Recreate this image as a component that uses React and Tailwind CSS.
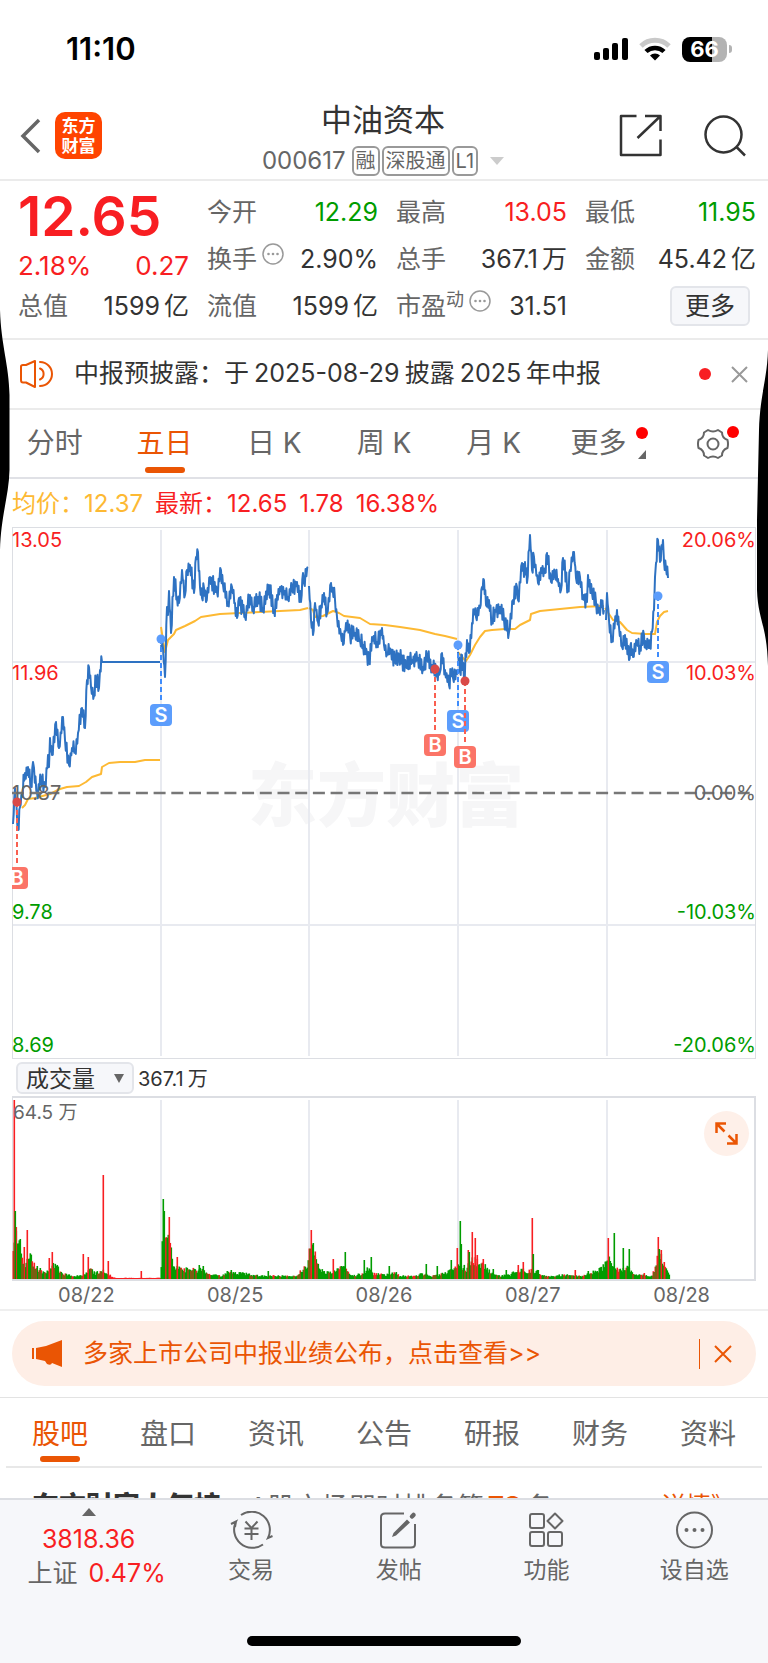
import { useMemo, useState } from 'react';

const GREEN = '#009c00';
const RED = '#f81e22';

const PRICE_DAYS = [
  [13,824,15,788,18,830,20,807,22,793,25,773,28,767,31,787,33,762,34,768,37,793,41,780,45,787,48,755,49,767,50,738,52,755,56,722,59,748,63,717,65,740,69,765,72,748,75,750,78,733,82,708,85,728,87,680,89,667,91,687,94,695,96,678,99,688,100,670,102,662],
  [161,645,163,648,165,677,167,607,168,615,169,591,171,633,174,577,177,598,179,603,182,570,185,595,187,570,190,565,194,593,196,557,198,552,200,587,202,598,204,588,206,602,210,577,217,592,221,570,223,585,228,602,232,587,235,603,237,618,239,598,245,617,250,595,253,607,258,597,263,608,269,585,274,610,280,587,288,597,292,588,297,582,301,602,303,573,304,583,308,567],
  [309,586,311,620,313,635,315,603,318,622,324,593,327,613,331,583,335,600,337,617,341,635,343,645,346,623,350,635,355,633,360,640,363,645,367,653,369,663,372,637,377,642,382,628,384,645,387,653,391,650,395,662,399,655,406,667,412,660,418,658,423,667,427,657,432,665,437,673,440,672,442,653,445,670,449,685,451,670,453,678,457,675],
  [458,652,460,672,462,655,464,680,467,640,469,653,472,623,474,610,476,617,480,608,482,587,484,580,486,605,489,600,492,622,495,610,500,607,504,620,509,632,513,600,517,587,518,600,522,563,524,577,525,562,527,583,530,535,532,570,534,557,538,583,541,568,545,573,547,553,551,582,555,573,561,590,563,558,568,590,570,570,574,552,576,578,580,577,583,595,587,602,588,575,592,593,596,602,600,615,601,600,604,610],
  [606,620,607,593,609,620,612,640,617,610,619,627,622,647,625,635,629,660,631,643,633,657,637,642,640,646,644,635,646,648,648,642,650,648,652,632,654,610,655,577,656,563,658,540,660,562,663,540,664,562,666,568,668,578],
];

const AVERAGE_DAYS = [
  '22,808 25,805 28,799 35,798 50,794 60,789 67,787 79,786 86,782 92,777 101,774 102,767 109,763 120,762 135,762 145,760 160,760',
  '161,627 163,640 165,652 168,640 174,634 176,630 185,626 195,621 201,617 220,614 240,613 260,612 280,611 300,610 308,608',
  '309,608 313,610 315,617 323,616 329,613 333,611 339,613 344,616 360,618 370,624 385,625 400,627 420,630 435,634 445,636 457,639',
  '458,652 462,657 466,661 470,655 475,645 480,637 485,631 492,630 505,629 515,629 520,625 526,622 530,620 531,614 540,611 560,609 580,607 604,606',
  '605,608 609,614 613,620 620,622 627,630 632,633 645,634 655,634 657,622 660,616 664,612 668,611',
];

const VOLUME_LEVELS = [
  13,40,15,50,17,40,20,25,25,15,27,28,32,20,36,10,40,10,45,5,50,9,53,14,57,11,62,5,70,4,77,3,85,4,90,10,95,5,100,8,105,7,112,2,115,1,135,1,160,1,
  162,30,164,40,167,40,170,32,173,15,178,10,185,9,200,9,210,4,222,3,230,7,240,6,245,5,260,3,280,3,297,3,300,9,307,12,309,25,313,28,318,12,325,6,335,7,342,12,347,8,352,3,362,5,368,10,373,5,385,4,392,6,400,3,
  410,3,425,5,430,3,440,4,447,7,452,10,457,10,458,15,462,12,466,10,470,18,475,17,480,15,485,13,490,6,500,3,510,4,516,8,522,9,526,6,530,8,536,8,540,4,550,3,565,4,580,3,590,6,598,8,605,14,609,18,615,10,620,8,626,12,632,7,636,4,652,3,656,15,660,28,664,12,668,6,670,2,
];

const RED_SPIKES = [14,179,16,52,24,32,27,49,49,21,52,27,83,25,88,22,103,104,108,18,141,8,169,62,170,36,177,22,311,49,315,22,333,20,457,31,468,29,472,47,475,41,477,24,483,20,518,14,523,17,532,61,575,9,608,41,644,6,658,42,661,29,664,17];
const GREEN_SPIKES = [15,68,20,40,163,80,164,68,199,14,203,13,227,8,231,9,268,8,313,36,345,27,364,19,371,22,389,13,396,7,426,15,437,13,451,19,460,58,461,35,469,27,493,10,506,9,533,25,538,9,588,8,599,11,614,46,623,31,629,30,659,30];

const TRADES = [
  { type: 'B', x: 17, y: 802 },
  { type: 'S', x: 161, y: 639 },
  { type: 'B', x: 435, y: 669 },
  { type: 'S', x: 458, y: 645 },
  { type: 'B', x: 465, y: 681 },
  { type: 'S', x: 658, y: 596 },
];

const GRID_X = [161, 309, 458, 607];

const pairs = (flat) => {
  const out = [];
  for (let i = 0; i < flat.length; i += 2) out.push([flat[i], flat[i + 1]]);
  return out;
};

// Small seeded generator so the ticks are the same on every render
const createRandom = (seed) => {
  let s = seed;
  return () => {
    s = (s * 16807) % 2147483647;
    return s / 2147483647;
  };
};

const buildPriceLine = (flat, seed) => {
  const random = createRandom(seed);
  const pts = pairs(flat);
  const out = [];
  pts.forEach(([x, y], i) => {
    out.push(`${x},${y}`);
    const next = pts[i + 1];
    if (!next) return;
    const steps = Math.max(1, Math.round((next[0] - x) / 0.8));
    for (let k = 1; k < steps; k++) {
      const t = k / steps;
      const jitter = (k % 2 ? 1 : -1) * (2 + random() * 7);
      out.push(`${(x + (next[0] - x) * t).toFixed(1)},${(y + (next[1] - y) * t + jitter).toFixed(1)}`);
    }
  });
  return out.join(' ');
};

const buildVolumeBars = () => {
  const random = createRandom(77);
  const levels = pairs(VOLUME_LEVELS);
  const bars = [];
  for (let i = 0; i < levels.length - 1; i++) {
    const [x0, h0] = levels[i];
    const [x1, h1] = levels[i + 1];
    for (let x = x0; x < x1; x++) {
      const h = h0 + ((h1 - h0) * (x - x0)) / (x1 - x0);
      const quiet = x > 108 && x < 161;
      bars.push({ x, h: Math.max(1, h * (0.7 + random() * 0.6)), color: quiet || random() < 0.2 ? RED : GREEN });
    }
  }
  pairs(RED_SPIKES).forEach(([x, h]) => bars.push({ x, h, color: RED }));
  pairs(GREEN_SPIKES).forEach(([x, h]) => bars.push({ x, h, color: GREEN }));
  return bars;
};

function StatusBar() {
  return (
    <div className="flex h-24 items-center justify-between pt-0.5 pl-[66px] pr-9 text-black">
      <span className="text-[31px] font-semibold">11:10</span>
      <div className="flex items-center gap-[11px]">
        <svg width="34" height="24" viewBox="0 0 34 24" fill="currentColor">
          <rect x="0" y="15" width="6" height="8" rx="2" />
          <rect x="9" y="11" width="6" height="12" rx="2" />
          <rect x="18" y="6" width="6" height="17" rx="2" />
          <rect x="28" y="1" width="6" height="22" rx="2" />
        </svg>
        <svg width="32" height="24" viewBox="0 0 32 24" fill="none">
          <path d="M2 9 A20 20 0 0 1 30 9" stroke="#c9c9c9" strokeWidth="5" />
          <path d="M7 14.500 A13 13 0 0 1 25 14.500" stroke="currentColor" strokeWidth="4.500" />
          <path d="M16 23.500 L11 18.500 A7 7 0 0 1 21 18.500 Z" fill="currentColor" />
        </svg>
        <div className="flex items-center gap-0.5">
          <div className="flex h-[25px] w-[45px] items-center justify-center rounded-lg bg-linear-to-r from-black from-66% to-[#b3b3b3] to-66%">
            <span className="text-[22px] leading-none font-bold text-white">66</span>
          </div>
          <div className="h-2 w-[3px] rounded-r-full bg-[#b3b3b3]" />
        </div>
      </div>
    </div>
  );
}

function Header() {
  return (
    <header className="grid h-[85px] grid-cols-[1fr_auto_1fr] items-center border-b-2 border-[#ebebeb] pl-5 pr-[22px]">
      <div className="flex items-center gap-3.5 pb-1">
        <button type="button" aria-label="返回">
          <svg width="21" height="36" viewBox="0 0 21 36" fill="none" stroke="#666" strokeWidth="3.500">
            <path d="M19 2 L3 18 L19 34" />
          </svg>
        </button>
        <a href="#home" className="flex h-[47px] w-[47px] flex-col items-center justify-center rounded-[10px] bg-[#ff4400] text-[17px] leading-[20px] font-bold text-white">
          <span>东方</span>
          <span>财富</span>
        </a>
      </div>
      <div className="flex flex-col items-center pt-1">
        <h1 className="text-[31px] leading-[38px] text-[#333]">中油资本</h1>
        <div className="mt-1 flex items-center gap-0.5 text-[24px] leading-[36px] text-[#666]">
          <span className="mr-1">000617</span>
          <span className="rounded-md border-2 border-[#999] px-0.5 text-[20px] leading-[26px]">融</span>
          <span className="rounded-md border-2 border-[#999] px-0.5 text-[20px] leading-[26px]">深股通</span>
          <span className="rounded-md border-2 border-[#999] px-0.5 text-[20px] leading-[26px]">L1</span>
          <svg className="ml-2.5" width="14" height="8" viewBox="0 0 14 8" fill="#ccc">
            <path d="M0 0 H14 L7 8 Z" />
          </svg>
        </div>
      </div>
      <div className="flex items-center justify-end gap-[42px] pb-1">
        <button type="button" aria-label="分享">
          <svg width="43" height="43" viewBox="0 0 43 43" fill="none" stroke="#333" strokeWidth="2.500" strokeLinejoin="round">
            <path d="M17.500 2 H2 V41 H41.500 V25.500" />
            <path d="M26 2 H41.500 V17 M41 2.500 L18.500 24" />
          </svg>
        </button>
        <button type="button" aria-label="搜索">
          <svg width="42" height="42" viewBox="0 0 42 42" fill="none" stroke="#333" strokeWidth="2.500">
            <circle cx="19.500" cy="19.500" r="18" />
            <path d="M32.500 32 L41 40.500" />
          </svg>
        </button>
      </div>
    </header>
  );
}

function InfoDot() {
  return (
    <svg className="ml-[5px] mb-2.5 shrink-0" width="22" height="22" viewBox="0 0 22 22" fill="none">
      <circle cx="11" cy="11" r="10" stroke="#999" strokeWidth="1.500" />
      <circle cx="6.500" cy="11" r="1.300" fill="#999" />
      <circle cx="11" cy="11" r="1.300" fill="#999" />
      <circle cx="15.500" cy="11" r="1.300" fill="#999" />
    </svg>
  );
}

function Stat({ label, value, tone = 'text-[#333]', info = false }) {
  return (
    <div className="flex h-[47px] items-center">
      <span className="text-[#666]">{label}</span>
      {info && <InfoDot />}
      <span className={`ml-auto ${tone}`}>{value}</span>
    </div>
  );
}

function Quote() {
  return (
    <section className="grid grid-cols-4 gap-x-[18px] border-b-2 border-[#ebebeb] pt-[7px] pr-3 pb-[9px] pl-[18px] text-[25px] leading-[30px] whitespace-nowrap">
      <div>
        <div className="flex h-14 items-center text-[55px] font-semibold text-[#f81e22]">12.65</div>
        <div className="flex h-10 items-center justify-between pt-1 text-[26px] text-[#f81e22]">
          <span>2.18%</span>
          <span>0.27</span>
        </div>
        <div className="flex h-11 items-center justify-between">
          <span className="text-[#666]">总值</span>
          <span className="text-[#333]">1599<span className="ml-1">亿</span></span>
        </div>
      </div>
      <div>
        <Stat label="今开" value="12.29" tone="text-[#009c00]" />
        <Stat label="换手" value="2.90%" info />
        <Stat label="流值" value={<>1599<span className="ml-1">亿</span></>} />
      </div>
      <div>
        <Stat label="最高" value="13.05" tone="text-[#f81e22]" />
        <Stat label="总手" value={<>367.1<span className="ml-1">万</span></>} />
        <Stat label={<>市盈<sup className="text-[18px]">动</sup></>} value="31.51" info />
      </div>
      <div>
        <Stat label="最低" value="11.95" tone="text-[#009c00]" />
        <Stat label="金额" value={<>45.42<span className="ml-1">亿</span></>} />
        <div className="flex h-[47px] items-center justify-end pr-1.5">
          <button type="button" className="h-10 w-20 rounded-md border-2 border-[#e3e5ea] bg-[#f6f7fa] text-[#333]">更多</button>
        </div>
      </div>
    </section>
  );
}

function Notice() {
  return (
    <section className="flex h-[70px] items-center border-b-2 border-[#ebebeb] pl-5 pr-5 text-[25px] text-[#333]">
      <svg width="34" height="30" viewBox="0 0 34 30" fill="none" stroke="#ea5504" strokeWidth="2" strokeLinejoin="round" strokeLinecap="round">
        <path d="M1 7.500 Q1 6 3 6 H6 L15 2 V28 L6 23.500 H3 Q1 23.500 1 21 Z" />
        <path d="M20 9.500 A6 6 0 0 1 20 20.500 M20 3 A12 12 0 0 1 20 27" />
      </svg>
      <p className="ml-5 flex-1 whitespace-nowrap">
        中报预披露：于<span className="mx-[5px]">2025-08-29</span>披露<span className="mx-[5px]">2025</span>年中报
      </p>
      <span className="h-3 w-3 rounded-full bg-[#f81e22]" />
      <button type="button" aria-label="关闭" className="ml-5">
        <svg width="17" height="17" viewBox="0 0 17 17" stroke="#999" strokeWidth="2">
          <path d="M1 1 L16 16 M16 1 L1 16" />
        </svg>
      </button>
    </section>
  );
}

function PeriodTabs() {
  const [active, setActive] = useState('五日');
  const tabs = ['分时', '五日', '日 K', '周 K', '月 K'];

  return (
    <nav className="grid h-[69px] grid-cols-7 border-b-2 border-[#e0e1e6] text-[28px] text-[#666]">
      {tabs.map((tab) => (
        <button
          key={tab}
          type="button"
          onClick={() => setActive(tab)}
          className={`relative pb-px whitespace-nowrap ${active === tab ? 'text-[#ea5504]' : ''}`}
        >
          {tab}
          {active === tab && <span className="absolute bottom-1 left-1/2 h-1.5 w-10 -translate-x-1/2 rounded-full bg-[#ea5504]" />}
        </button>
      ))}
      <button type="button" className="flex items-center justify-center gap-2.5 pb-px pl-3">
        更多
        <span className="flex h-8 flex-col items-center justify-between">
          <span className="h-3 w-3 rounded-full bg-[#ff0000]" />
          <svg width="8" height="9" viewBox="0 0 8 9" fill="#666">
            <path d="M8 0 V9 H0 Z" />
          </svg>
        </span>
      </button>
      <button type="button" aria-label="设置" className="flex items-center justify-center">
        <span className="relative">
          <svg width="32" height="32" viewBox="0 0 32 32" fill="none" stroke="#666" strokeWidth="2" strokeLinejoin="round">
            <path d="M11 2 Q16 5 21 2 L25 4.500 Q25 10 30.500 12 Q31.500 16 30.500 20 Q25 22 25 27.500 L21 30 Q16 27 11 30 L7 27.500 Q7 22 1.500 20 Q0.500 16 1.500 12 Q7 10 7 4.500 Z" />
            <circle cx="16" cy="16" r="5.500" />
          </svg>
          <span className="absolute -top-0.5 -right-2.5 h-3 w-3 rounded-full bg-[#ff0000]" />
        </span>
      </button>
    </nav>
  );
}

function PriceChart() {
  const lines = useMemo(() => PRICE_DAYS.map((day, i) => buildPriceLine(day, 31 + i * 17)), []);

  return (
    <svg className="block w-full" viewBox="12 527 744 532" fontSize="20" role="img" aria-label="五日走势">
      <text x="386" y="821" textAnchor="middle" fontSize="69" fontWeight="900" fill="#f6f6f7">东方财富</text>
      <g stroke="#e8eaf0" strokeWidth="2">
        {GRID_X.map((x) => <path key={x} d={`M${x} 530 V1056`} />)}
        <path d="M12 662 H755 M12 925 H755" />
      </g>
      <rect x="12.500" y="527.500" width="743" height="531" fill="none" stroke="#dcdee3" />
      <g fill={RED}>
        <text x="12" y="547">13.05</text>
        <text x="12" y="680">11.96</text>
        <text x="756" y="547" textAnchor="end">20.06%</text>
        <text x="756" y="680" textAnchor="end">10.03%</text>
      </g>
      <g fill={GREEN}>
        <text x="12" y="919">9.78</text>
        <text x="12" y="1052">8.69</text>
        <text x="756" y="919" textAnchor="end">-10.03%</text>
        <text x="756" y="1052" textAnchor="end">-20.06%</text>
      </g>
      <g fill="none" stroke="#fdb933" strokeWidth="2" strokeLinejoin="round">
        {AVERAGE_DAYS.map((points) => <polyline key={points} points={points} />)}
      </g>
      <g fill="none" stroke="#2e72c2" strokeWidth="2" strokeLinejoin="round">
        {lines.map((points) => <polyline key={points} points={points} />)}
        <path d="M102 662 H160" />
      </g>
      <path d="M12 793 H755" stroke="#777" strokeWidth="2.500" strokeDasharray="12 5.700" />
      <g fill="#666">
        <text x="12" y="800">10.87</text>
        <text x="756" y="800" textAnchor="end">0.00%</text>
      </g>
      {TRADES.map(({ type, x, y }) => {
        const color = type === 'B' ? '#fb7467' : '#5c9dfc';
        return (
          <g key={x}>
            <path d={`M${x} ${y} V${y + 64}`} stroke={type === 'B' ? '#f95f50' : '#3f8cfb'} strokeWidth="2" strokeDasharray="5 3" />
            <circle cx={x} cy={y} r="4.500" fill={type === 'B' ? '#d94a48' : color} />
            <rect x={x - 11} y={y + 65} width="22" height="22" rx="4" fill={color} />
            <text x={x} y={y + 83} textAnchor="middle" fontSize="20" fontWeight="600" fill="#fff">{type}</text>
          </g>
        );
      })}
    </svg>
  );
}

function VolumeChart() {
  const bars = useMemo(buildVolumeBars, []);

  return (
    <div className="relative">
      <svg className="block w-full" viewBox="12 1096 744 185" fontSize="19" role="img" aria-label="成交量">
        <path d={GRID_X.map((x) => `M${x} 1100 V1279`).join(' ')} stroke="#e8eaf0" strokeWidth="2" />
        <path d="M12 1097 H755 V1280 H12 Z" fill="none" stroke="#dcdee3" strokeWidth="2" />
        {bars.map(({ x, h, color }, i) => (
          <rect key={i} x={x - 0.5} y={1279 - h} width="1.600" height={h} fill={color} />
        ))}
        <text x="13" y="1119" fill="#666">64.5 万</text>
      </svg>
      <button type="button" aria-label="全屏" className="absolute top-[15px] right-[7px] flex h-[45px] w-[45px] items-center justify-center rounded-full bg-[#fef0e9]">
        <svg width="23" height="23" viewBox="0 0 23 23" fill="none" stroke="#ea5504" strokeWidth="2.500">
          <path d="M11 1.500 H1.500 V11 M1.500 1.500 L9.500 9.500 M12 21.500 H21.500 V12 M21.500 21.500 L13.500 13.500" />
        </svg>
      </button>
    </div>
  );
}

function ChartPanel() {
  return (
    <section className="border-b-2 border-[#efefef] px-3">
      <div className="flex h-12 items-center gap-3 pt-0.5 text-[24px] text-[#f81e22] whitespace-nowrap">
        <span className="text-[#fdb933]">均价：12.37</span>
        <span>最新：12.65</span>
        <span>1.78</span>
        <span>16.38%</span>
      </div>
      <PriceChart />
      <div className="flex h-[37px] items-center gap-1 pl-1">
        <div className="relative">
          <select aria-label="指标" className="h-8 w-[118px] appearance-none rounded-md border-2 border-[#e3e5ea] bg-[#f6f7fa] pt-0.5 pl-2 text-[23px] leading-[26px] text-[#333]">
            <option>成交量</option>
            <option>成交额</option>
          </select>
          <svg className="pointer-events-none absolute top-3 right-2.5" width="10" height="9" viewBox="0 0 10 9" fill="#666">
            <path d="M0 0 H10 L5 9 Z" />
          </svg>
        </div>
        <span className="pt-0.5 text-[20px] text-[#333]">367.1<span className="ml-1">万</span></span>
      </div>
      <VolumeChart />
      <div className="grid h-7 grid-cols-5 items-center text-center text-[20px] leading-6 text-[#666]">
        {['08/22', '08/25', '08/26', '08/27', '08/28'].map((day) => <span key={day}>{day}</span>)}
      </div>
    </section>
  );
}

function Banner() {
  return (
    <section className="border-b border-[#e3e3e3] px-3 pt-2.5 pb-[11px]">
      <div className="flex h-[65px] items-center rounded-full bg-[#feeee6] pr-6 pl-5 text-[25px] text-[#ea5504]">
        <svg width="31" height="27" viewBox="0 0 31 27" fill="currentColor">
          <path d="M0 8 H2 V19 H0 Z M4 8 L14 6 L30 0 V27 L20 23 Q19 26 15 24 L13 21 L4 19 Z" />
        </svg>
        <a href="#reports" className="ml-5 flex-1 whitespace-nowrap">多家上市公司中报业绩公布，点击查看&gt;&gt;</a>
        <span className="h-[30px] w-px bg-[#ea5504]" />
        <button type="button" aria-label="关闭" className="ml-3.5">
          <svg width="18" height="18" viewBox="0 0 18 18" stroke="currentColor" strokeWidth="2">
            <path d="M1 1 L17 17 M17 1 L1 17" />
          </svg>
        </button>
      </div>
    </section>
  );
}

function ContentTabs() {
  const [active, setActive] = useState('股吧');

  return (
    <nav className="mx-1.5 grid h-[70px] shrink-0 grid-cols-7 border-b-2 border-[#e8e8e8] text-[28px] text-[#666]">
      {['股吧', '盘口', '资讯', '公告', '研报', '财务', '资料'].map((tab) => (
        <button
          key={tab}
          type="button"
          onClick={() => setActive(tab)}
          className={`relative pt-1 ${active === tab ? 'text-[#ea5504]' : ''}`}
        >
          {tab}
          {active === tab && <span className="absolute bottom-1 left-1/2 h-1.5 w-10 -translate-x-1/2 rounded-full bg-[#ea5504]" />}
        </button>
      ))}
    </nav>
  );
}

function Popularity() {
  return (
    <section className="flex h-[78px] items-center px-8 text-[27px] whitespace-nowrap text-[#666]">
      <h2 className="text-[27px] font-black text-[#333]">东方财富人气榜</h2>
      <p className="ml-7 flex-1">A股市场即时排名第<span className="mx-1 text-[28px] font-bold text-[#ea5504]">78</span>名</p>
      <a href="#rank" className="text-[25px] text-[#ea5504]">详情》</a>
    </section>
  );
}

const ACTIONS = [
  {
    label: '交易',
    icon: (
      <>
        <path d="M11 4 A18.300 18.300 0 0 1 38 27 L42.500 25" />
        <path d="M1 13 L6 10.500 A18.300 18.300 0 0 0 33 33.500 M6 10.500 L5 16" />
        <path d="M15.500 10.500 L21.500 17 L27.500 10.500 M21.500 17 V29 M14.500 17.500 H28.500 M14.500 23 H28.500" />
      </>
    ),
  },
  {
    label: '发帖',
    icon: (
      <>
        <path d="M27 2.500 H8 Q4 2.500 4 6 V33 Q4 36.500 8 36.500 H34 Q38 36.500 38 33 V13" />
        <path d="M35 5.500 L36.500 4" strokeWidth="4.500" strokeLinecap="round" />
        <path d="M30 8.500 L33 11.500 L19 24.500 L15 26 L16.500 22 Z" fill="#666" stroke="none" />
      </>
    ),
  },
  {
    label: '功能',
    icon: (
      <>
        <rect x="5" y="3" width="14" height="14" rx="2" />
        <rect x="5" y="21" width="14" height="14" rx="2" />
        <rect x="23" y="21" width="14" height="14" rx="2" />
        <path d="M30 2.500 L37.500 10 L30 17.500 L22.500 10 Z" strokeLinejoin="round" />
      </>
    ),
  },
  {
    label: '设自选',
    icon: (
      <>
        <circle cx="21.500" cy="19" r="17.500" />
        <g fill="#666" stroke="none">
          <circle cx="13.500" cy="19" r="2" />
          <circle cx="21.500" cy="19" r="2" />
          <circle cx="29.500" cy="19" r="2" />
        </g>
      </>
    ),
  },
];

function BottomBar() {
  return (
    <footer className="shrink-0 border-t-2 border-[#dcdee3] bg-[#f6f7fa] text-[#666]">
      <div className="grid h-[136px] grid-cols-[6fr_5fr_5fr_5fr_5fr] items-start">
        <button type="button" className="flex flex-col items-center pt-2 text-[25px] leading-[34px] whitespace-nowrap">
          <svg width="14" height="8" viewBox="0 0 14 8" fill="#666">
            <path d="M7 0 L14 8 H0 Z" />
          </svg>
          <span className="mt-1.5 text-[#f81e22]">3818.36</span>
          <span className="pl-4">上证 <span className="ml-1 text-[#f81e22]">0.47%</span></span>
        </button>
        {ACTIONS.map(({ label, icon }) => (
          <button key={label} type="button" className="flex flex-col items-center pt-[11px] text-[23px] leading-[30px]">
            <svg width="43" height="38" viewBox="0 0 43 38" fill="none" stroke="#666" strokeWidth="2">
              {icon}
            </svg>
            <span className="mt-1.5">{label}</span>
          </button>
        ))}
      </div>
      <div className="mx-auto mb-[17px] h-2.5 w-[274px] rounded-full bg-black" />
    </footer>
  );
}

export default function App() {
  return (
    <div className="relative flex h-screen flex-col overflow-hidden bg-white font-['Inter','Noto_Sans_CJK_SC',sans-serif]">
      <main className="min-h-0 flex-1 overflow-y-auto [scrollbar-width:none]">
        <StatusBar />
        <Header />
        <Quote />
        <Notice />
        <PeriodTabs />
        <ChartPanel />
        <Banner />
        <ContentTabs />
        <Popularity />
      </main>
      <BottomBar />

      {/* Device edges */}
      <svg className="pointer-events-none absolute top-[310px] left-0" width="10" height="240" viewBox="0 0 10 240">
        <path d="M0 0 C1 35 9 55 9.500 85 V160 C9 185 1 205 0 240 Z" />
      </svg>
      <svg className="pointer-events-none absolute top-[350px] right-0" width="12" height="316" viewBox="0 0 12 316">
        <path d="M12 0 C11 30 4 45 3 80 L1 170 V240 C2 270 11 275 12 316 Z" />
      </svg>
    </div>
  );
}
